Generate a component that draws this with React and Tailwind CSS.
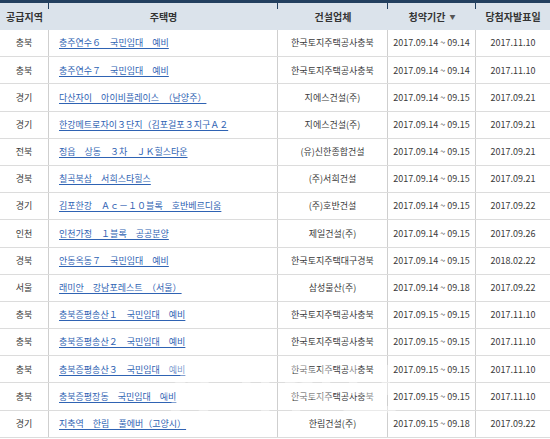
const rows = [
  ["충북", "충주연수６　국민임대　예비", "한국토지주택공사충북", "2017.09.14 ~ 09.14", "2017.11.10"],
  ["충북", "충주연수７　국민임대　예비", "한국토지주택공사충북", "2017.09.14 ~ 09.14", "2017.11.10"],
  ["경기", "다산자이　아이비플레이스　（남양주）", "지에스건설(주)", "2017.09.14 ~ 09.15", "2017.09.21"],
  ["경기", "한강메트로자이３단지（김포걸포３지구Ａ２", "지에스건설(주)", "2017.09.14 ~ 09.15", "2017.09.21"],
  ["전북", "정읍　상동　３차　ＪＫ힐스타운", "(유)신한종합건설", "2017.09.14 ~ 09.15", "2017.09.21"],
  ["경북", "칠곡북삼　서희스타힐스", "(주)서희건설", "2017.09.14 ~ 09.15", "2017.09.21"],
  ["경기", "김포한강　Ａｃ－１０블록　호반베르디움", "(주)호반건설", "2017.09.14 ~ 09.15", "2017.09.22"],
  ["인천", "인천가정　１블록　공공분양", "제일건설(주)", "2017.09.14 ~ 09.15", "2017.09.26"],
  ["경북", "안동옥동７　국민임대　예비", "한국토지주택대구경북", "2017.09.14 ~ 09.15", "2018.02.22"],
  ["서울", "래미안　강남포레스트　（서울）", "삼성물산(주)", "2017.09.14 ~ 09.18", "2017.09.22"],
  ["충북", "충북증평송산１　국민임대　예비", "한국토지주택공사충북", "2017.09.15 ~ 09.15", "2017.11.10"],
  ["충북", "충북증평송산２　국민임대　예비", "한국토지주택공사충북", "2017.09.15 ~ 09.15", "2017.11.10"],
  ["충북", "충북증평송산３　국민임대　예비", "한국토지주택공사충북", "2017.09.15 ~ 09.15", "2017.11.10"],
  ["충북", "충북증평장동　국민임대　예비", "한국토지주택공사충북", "2017.09.15 ~ 09.15", "2017.11.10"],
  ["경기", "지축역　한림　풀에버（고양시）", "한림건설(주)", "2017.09.15 ~ 09.18", "2017.09.22"],
];

const cols = "grid grid-cols-[49px_229px_110px_88px_74px]";

export default function App() {
  return (
    <div
      className="relative w-[550px] h-[439px] overflow-hidden bg-white text-[#3a3a3a]"
      style={{ fontFamily: '"Noto Sans CJK KR", "Noto Sans", sans-serif' }}
    >
      <div className={`${cols} h-[30px] bg-[#dbe3eb] border-t-[3px] border-[#23405f] text-[10px] font-bold text-[#333]`}>
        {["공급지역", "주택명", "건설업체", "청약기간", "당첨자발표일"].map((h, i) => (
          <div key={h} className="relative flex items-center justify-center">
            {i < 4 && <span className="absolute right-0 top-0 w-px h-[6px] bg-[#23405f]" />}
            <span>{h}</span>
            {i === 3 && <span className="ml-1 text-[6px] text-[#555]">▼</span>}
          </div>
        ))}
      </div>
      {rows.map((r, idx) => (
        <div key={idx} className={`${cols} h-[27.2px] border-b border-[#dcdcdc] text-[9px]`}>
          <div className="flex items-center justify-center border-r border-[#cfcfcf]">{r[0]}</div>
          <div className="flex items-center pl-[10px] border-r border-[#cfcfcf] overflow-hidden whitespace-nowrap">
            <span className="text-[#2f63b3] underline underline-offset-2">{r[1]}</span>
          </div>
          <div className="flex items-center justify-center border-r border-[#cfcfcf] whitespace-nowrap">{r[2]}</div>
          <div className="flex items-center justify-center border-r border-[#cfcfcf] whitespace-nowrap">{r[3]}</div>
          <div className="flex items-center justify-center whitespace-nowrap">{r[4]}</div>
        </div>
      ))}
      <div className="absolute left-[158px] top-[356px] text-[62px] font-bold leading-none text-white/40 tracking-[4px] pointer-events-none">
        경기일보
      </div>
    </div>
  );
}
